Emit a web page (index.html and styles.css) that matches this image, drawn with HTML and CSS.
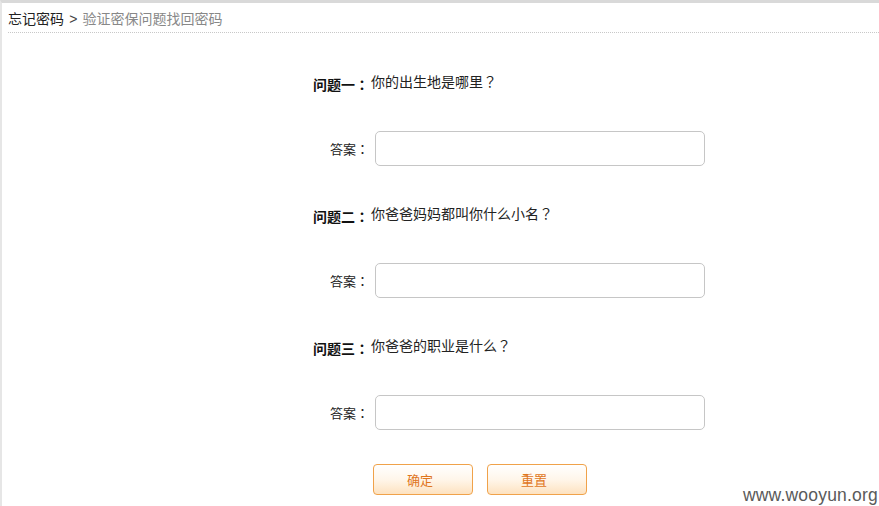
FILE: index.html
```html
<!DOCTYPE html>
<html lang="zh-CN">
<head>
<meta charset="utf-8">
<title>验证密保问题找回密码</title>
<link rel="stylesheet" href="styles.css">
</head>
<body>
<div class="page">
  <div class="crumb">
    <span class="crumb-root">忘记密码</span>
    <span class="crumb-sep">&gt;</span>
    <span class="crumb-cur">验证密保问题找回密码</span>
  </div>
  <form class="form">
    <div class="q-label">问题一<span class="p">：</span></div>
    <div class="q-text">你的出生地是哪里<span class="p">？</span></div>
    <div class="a-label">答案<span class="p">：</span></div>
    <div class="a-field"><input class="input" type="text"></div>

    <div class="q-label">问题二<span class="p">：</span></div>
    <div class="q-text">你爸爸妈妈都叫你什么小名<span class="p">？</span></div>
    <div class="a-label">答案<span class="p">：</span></div>
    <div class="a-field"><input class="input" type="text"></div>

    <div class="q-label">问题三<span class="p">：</span></div>
    <div class="q-text">你爸爸的职业是什么<span class="p">？</span></div>
    <div class="a-label">答案<span class="p">：</span></div>
    <div class="a-field"><input class="input" type="text"></div>

    <div class="spacer"></div>
    <div class="buttons">
      <button type="button" class="btn">确定</button>
      <button type="button" class="btn">重置</button>
    </div>
  </form>
  <div class="watermark">www.wooyun.org</div>
</div>
</body>
</html>
```

FILE: styles.css
```css
html, body {
  margin: 0;
  padding: 0;
  background: #fff;
}
body {
  font-family: "Liberation Sans", "Noto Sans CJK SC", sans-serif;
  color: #222;
  text-spacing-trim: space-all;
}
.p {
  font-family: "Noto Sans CJK TC", "Noto Sans CJK SC", sans-serif;
  display: inline-block;
  width: 1em;
  text-align: center;
}
.page {
  position: relative;
  width: 879px;
  height: 506px;
  box-sizing: border-box;
  border-top: 3px solid #d9d9d9;
  border-left: 2px solid #e6e6e6;
  overflow: hidden;
}
.crumb {
  margin-left: 6px;
  height: 30px;
  box-sizing: border-box;
  padding-top: 6px;
  border-bottom: 1px dotted #c8c8c8;
  font-size: 14px;
  line-height: 18px;
  font-family: "Noto Sans CJK SC", sans-serif;
}
.crumb-root { color: #222; }
.crumb-sep { color: #444; margin: 0 2px; font-family: "Liberation Sans", sans-serif; }
.crumb-cur { color: #888; }

.form {
  display: grid;
  grid-template-columns: 367px 330px;
  padding-top: 34px;
  font-family: "Noto Sans CJK SC", sans-serif;
}
.q-label {
  height: 30px;
  margin-bottom: 34px;
  display: flex;
  align-items: center;
  justify-content: flex-end;
  font-weight: bold;
  font-size: 14px;
  padding-top: 4px;
  padding-right: 0;
  box-sizing: border-box;
  color: #111;
}
.q-text {
  height: 30px;
  display: flex;
  align-items: center;
  font-size: 14px;
  padding-bottom: 2px;
  padding-left: 2px;
  box-sizing: border-box;
  color: #222;
}
.a-label {
  height: 35px;
  margin-bottom: 33px;
  display: flex;
  align-items: center;
  justify-content: flex-end;
  padding-right: 0;
  font-size: 13px;
  color: #222;
}
.a-field {
  height: 35px;
  padding-left: 6px;
}
.input {
  display: block;
  width: 330px;
  height: 35px;
  box-sizing: border-box;
  border: 1px solid #c6c6c6;
  border-radius: 5px;
  background: #fff;
  outline: none;
}
.spacer {
  height: 1px;
}
.buttons {
  display: flex;
  gap: 14px;
  padding-left: 4px;
  margin-top: 1px;
}
.btn {
  width: 100px;
  height: 31px;
  box-sizing: border-box;
  border: 1px solid #f0a24a;
  border-radius: 4px;
  background: linear-gradient(#ffffff 0%, #fff6ea 50%, #fde2c0 100%);
  color: #e0761c;
  font-family: "Noto Sans CJK SC", sans-serif;
  font-size: 13px;
  padding: 0 6px 0 0;
  cursor: pointer;
}
.watermark {
  position: absolute;
  right: 1px;
  bottom: 0px;
  font-family: "Liberation Sans", sans-serif;
  font-size: 17.5px;
  color: #5a5a5a;
  letter-spacing: 0.2px;
}
```
